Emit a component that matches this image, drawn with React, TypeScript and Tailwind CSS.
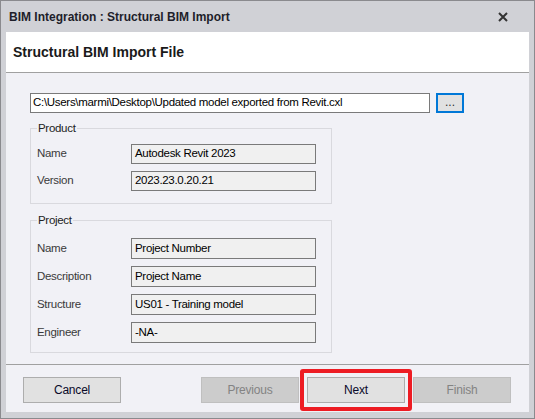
import type { ReactNode } from 'react';

const productRows = [
  { label: 'Name', value: 'Autodesk Revit 2023' },
  { label: 'Version', value: '2023.23.0.20.21' },
];

const projectRows = [
  { label: 'Name', value: 'Project Number' },
  { label: 'Description', value: 'Project Name' },
  { label: 'Structure', value: 'US01 - Training model' },
  { label: 'Engineer', value: '-NA-' },
];

function Group({ title, children, className }: { title: string; children: ReactNode; className: string }) {
  return (
    <fieldset className={`w-[302px] border border-[#d9d9de] ${className}`}>
      <legend className="px-[1px] text-[11.5px] tracking-[-0.3px] leading-[16px] text-[#222]">{title}</legend>
      {children}
    </fieldset>
  );
}

function Field({ label, value, tall }: { label: string; value: string; tall?: boolean }) {
  return (
    <div className="flex items-center text-[11.5px] tracking-[-0.3px]">
      <span className="w-[94px] shrink-0 text-[#3a3a3a]">{label}</span>
      <div
        className={`w-[185px] ${tall ? 'h-[21px]' : 'h-5'} flex items-center border border-[#7a7a7a] bg-[#f0f0f0] pl-[3px] text-black`}
      >
        {value}
      </div>
    </div>
  );
}

function Btn({ label, disabled }: { label: string; disabled?: boolean }) {
  return (
    <div
      className={`w-[98px] h-[26px] flex items-center justify-center border text-[12px] tracking-[-0.2px] ${
        disabled
          ? 'bg-[#cccccc] border-[#bfbfbf] text-[#838383]'
          : 'bg-[#e1e1e1] border-[#adadad] text-[#0a0a2a]'
      }`}
    >
      {label}
    </div>
  );
}

export default function App() {
  return (
    <div
      className="w-[535px] h-[419px] flex flex-col border border-[#8a8a8e] bg-[#d0d1d6]"
      style={{ fontFamily: '"Liberation Sans", Arial, sans-serif' }}
    >
      {/* title bar */}
      <div className="h-[31px] shrink-0 flex items-center justify-between pl-2 pr-[26px]">
        <span className="text-[12px] font-bold text-[#1e1e2a]">
          BIM Integration : Structural BIM Import
        </span>
        <svg width="10" height="10" viewBox="0 0 10 10" className="mt-[1px]">
          <path d="M1 1 L9 9 M9 1 L1 9" stroke="#333" strokeWidth="2" />
        </svg>
      </div>

      <div className="mx-[5px] flex-1 mb-[6px] flex flex-col bg-[#f1f1f6]">
        <div className="h-[41px] shrink-0 bg-white border-b border-[#a0a0a0] flex items-center pl-[7px]">
          <span className="text-[14px] font-bold text-[#1a1a1a]">Structural BIM Import File</span>
        </div>

        <div className="flex-1 pl-[24px] pt-[20px]">
          <div className="flex items-center gap-[6px]">
            <div className="w-[400px] h-5 flex items-center bg-white border border-[#7a7a7a] pl-[2px] text-[11.5px] text-black tracking-[-0.3px]">
              C:\Users\marmi\Desktop\Updated model exported from Revit.cxl
            </div>
            <div className="w-[28px] h-5 flex items-center justify-center bg-[#e1e1e1] border-2 border-[#0078d7] text-[12px] leading-none text-[#333] pb-[3px]">
              ...
            </div>
          </div>

          <Group title="Product" className="mt-[7px] pl-[6px] pt-[8px] pb-[12px]">
            <div className="flex flex-col gap-[7px]">
              {productRows.map(r => (
                <Field key={r.label} label={r.label} value={r.value} />
              ))}
            </div>
          </Group>

          <Group title="Project" className="mt-[8px] pl-[6px] pt-[10px] pb-[9px]">
            <div className="flex flex-col gap-[7px]">
              {projectRows.map(r => (
                <Field key={r.label} label={r.label} value={r.value} tall />
              ))}
            </div>
          </Group>
        </div>

        <div className="h-[48px] shrink-0 border-t border-[#a0a0a0] flex items-start pt-[12px] pl-[17px]">
          <Btn label="Cancel" />
          <div className="ml-[80px] flex gap-[8px]">
            <Btn label="Previous" disabled />
            <div className="relative">
              <Btn label="Next" />
              <div className="absolute -left-[7px] -right-[7px] -top-[8px] -bottom-[8px] border-4 border-[#ed1c24] rounded-[3px]" />
            </div>
            <Btn label="Finish" disabled />
          </div>
        </div>
      </div>
    </div>
  );
}
